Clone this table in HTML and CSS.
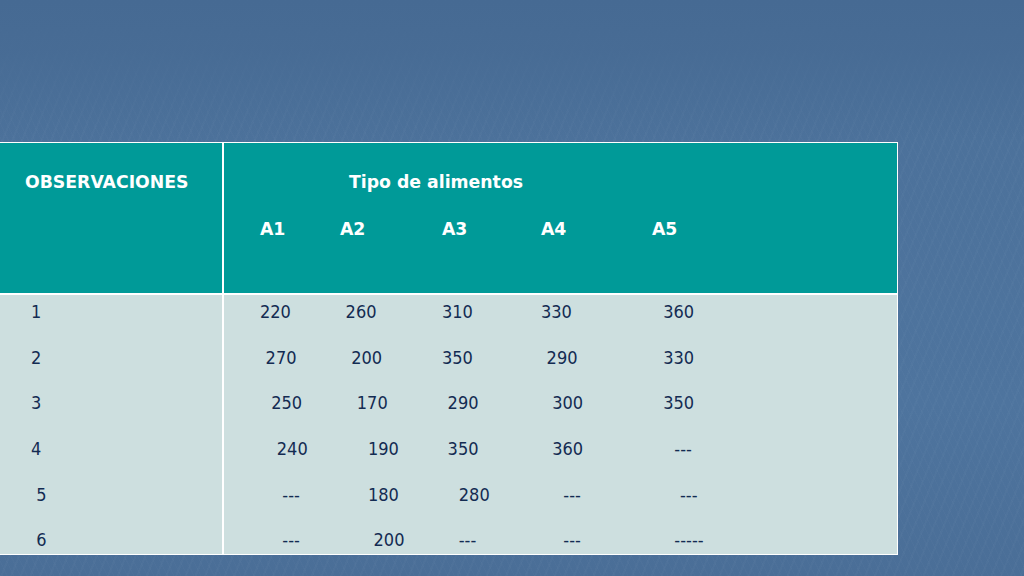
FILE: index.html
```html
<!DOCTYPE html>
<html lang="es">
<head>
<meta charset="utf-8">
<title>Tipo de alimentos</title>
<link rel="stylesheet" href="styles.css">
</head>
<body>
<div class="slide">
  <table class="data">
    <tr class="head">
      <td class="col-obs">
        <div class="obs-title">OBSERVACIONES</div>
      </td>
      <td class="col-main">
        <div class="main-title">Tipo de alimentos</div>
        <div class="cols hdr">
          <span>A1</span><span>A2</span><span>A3</span><span>A4</span><span>A5</span>
        </div>
      </td>
    </tr>
    <tr class="body">
      <td class="col-obs">
        <div class="obs-list">
          <span>1</span>
          <span>2</span>
          <span>3</span>
          <span>4</span>
          <span> 5</span>
          <span> 6</span>
        </div>
      </td>
      <td class="col-main">
        <div class="cols vals">
          <span>220</span><span> 260</span><span>310</span><span>330</span><span>  360</span>
          <span> 270</span><span>  200</span><span>350</span><span> 290</span><span>  330</span>
          <span>  250</span><span>   170</span><span> 290</span><span>  300</span><span>  350</span>
          <span>   240</span><span>     190</span><span> 350</span><span>  360</span><span>    ---</span>
          <span>    ---</span><span>     180</span><span>   280</span><span>    ---</span><span>     ---</span>
          <span>    ---</span><span>      200</span><span>   ---</span><span>    ---</span><span>    -----</span>
        </div>
      </td>
    </tr>
  </table>
</div>
</body>
</html>
```

FILE: styles.css
```css
html, body {
  margin: 0;
  padding: 0;
}

body {
  width: 1024px;
  height: 576px;
  overflow: hidden;
  font-family: "DejaVu Sans Condensed", "DejaVu Sans", Verdana, sans-serif;
  background:
    linear-gradient(180deg, #466a93 0px, rgba(71, 107, 148, 0.9) 50px, rgba(74, 110, 152, 0) 140px),
    repeating-linear-gradient(112deg, rgba(255, 255, 255, 0.02) 0 2px, rgba(255, 255, 255, 0) 2px 9px),
    repeating-linear-gradient(64deg, rgba(255, 255, 255, 0.015) 0 1px, rgba(255, 255, 255, 0) 1px 6px),
    linear-gradient(180deg, #4b7099 0%, #4e749e 70%, #4a6e97 100%);
}

.slide {
  padding-top: 142px;
}

.data {
  border-collapse: separate;
  border-spacing: 0;
  width: 898px;
  border-top: 1px solid #ffffff;
  border-right: 1px solid #ffffff;
  border-bottom: 1px solid #ffffff;
}

.data td {
  box-sizing: border-box;
  padding: 0;
  vertical-align: top;
}

.col-obs {
  width: 224px;
  border-right: 2px solid #ffffff;
}

.head td {
  height: 152px;
  background: #009a98;
  color: #ffffff;
  font-family: "DejaVu Sans", Verdana, sans-serif;
  font-weight: bold;
  font-size: 17.3px;
  line-height: 20px;
  border-bottom: 2px solid #ffffff;
}

.body td {
  height: 259px;
  background: #cddfdf;
  color: #132b52;
  font-size: 18px;
  line-height: 24px;
}

.head .col-obs {
  padding: 29px 0 0 25px;
}

.head .col-main {
  padding: 29px 0 0 36px;
}

.main-title {
  padding-left: 89px;
}

.cols {
  display: grid;
  grid-template-columns: 80px 102px 99px 111px 1fr;
}

.hdr {
  margin-top: 27px;
}

.body .col-obs {
  padding: 5px 0 0 31px;
}

.obs-list {
  display: flex;
  flex-direction: column;
  row-gap: 21.7px;
  white-space: pre;
}

.body .col-main {
  padding: 5px 0 0 36px;
}

.vals {
  row-gap: 21.7px;
  white-space: pre;
  word-spacing: 0.45px;
}
```
